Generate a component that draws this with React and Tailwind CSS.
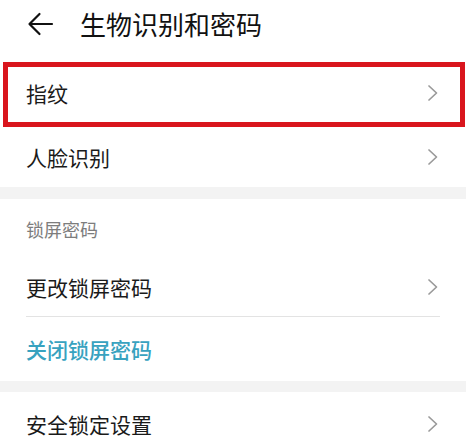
import React from "react";

const font = { fontFamily: '"Noto Sans CJK SC", "Noto Sans", sans-serif' };

function Chevron() {
  return (
    <svg width="12" height="18" viewBox="0 0 12 18" className="shrink-0">
      <path d="M2 2 L9.5 9 L2 16" fill="none" stroke="#9a9a9a" strokeWidth="1.7" strokeLinecap="round" strokeLinejoin="round" />
    </svg>
  );
}

function Row({ label, h, color = "text-[#1a1a1a]", chevron = true, weight = "" }) {
  return (
    <div className={`flex items-center justify-between pl-[26px] pr-[27px] ${h}`}>
      <span className={`text-[21px] leading-none ${color} ${weight}`}>{label}</span>
      {chevron && <Chevron />}
    </div>
  );
}

export default function App() {
  return (
    <div className="w-[466px] h-[440px] bg-white overflow-hidden" style={font}>
      <div className="flex items-center h-[47px] pl-[27px]">
        <svg width="27" height="24" viewBox="0 0 27 24" className="shrink-0">
          <path d="M25 12 H3 M12.5 2 L2.5 12 L12.5 22" fill="none" stroke="#111" strokeWidth="2.2" strokeLinecap="round" strokeLinejoin="round" />
        </svg>
        <span className="ml-[26px] text-[26px] leading-none text-[#111]">生物识别和密码</span>
      </div>
      <div className="h-[15px]" />
      <div className="ml-[3px] mr-[1px] h-[65px] border-[5px] border-[#d9151d] flex items-center justify-between pl-[18px] pr-[21px] pb-[3px]">
        <span className="text-[21px] leading-none text-[#1a1a1a]">指纹</span>
        <Chevron />
      </div>
      <Row label="人脸识别" h="h-[60px]" />
      <div className="h-[12px] bg-[#f3f3f3]" />
      <div className="h-[59px] flex items-center pl-[26px]">
        <span className="text-[18px] leading-none text-[#7d7d7d]">锁屏密码</span>
      </div>
      <Row label="更改锁屏密码" h="h-[58px]" />
      <div className="ml-[26px] mr-[26px] h-px bg-[#e3e3e3]" />
      <Row label="关闭锁屏密码" h="h-[64px]" color="text-[#38a2bf]" weight="font-medium" chevron={false} />
      <div className="h-[11px] bg-[#f3f3f3]" />
      <Row label="安全锁定设置" h="h-[64px]" />
    </div>
  );
}
